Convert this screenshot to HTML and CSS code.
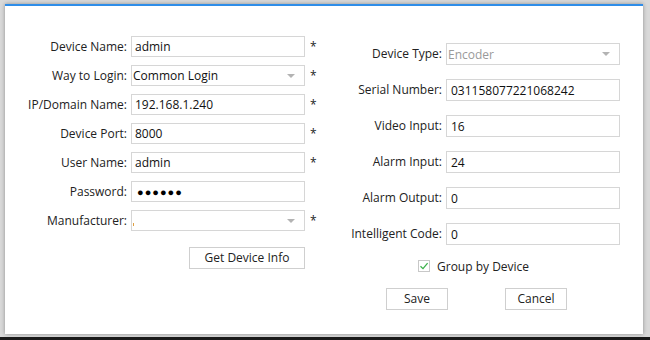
FILE: index.html
```html
<!DOCTYPE html>
<html>
<head>
<meta charset="utf-8">
<link rel="stylesheet" href="styles.css">
</head>
<body>
<div class="screen">
  <div class="dialog">
    <div class="col-left">
      <div class="lbl">Device Name:</div><div class="field">admin</div><div class="req">*</div>
      <div class="lbl">Way to Login:</div><div class="field combo">Common Login<span class="arrow"></span></div><div class="req">*</div>
      <div class="lbl">IP/Domain Name:</div><div class="field">192.168.1.240</div><div class="req">*</div>
      <div class="lbl">Device Port:</div><div class="field">8000</div><div class="req">*</div>
      <div class="lbl">User Name:</div><div class="field">admin</div><div class="req">*</div>
      <div class="lbl">Password:</div><div class="field pwd">●●●●●●</div><div class="req"></div>
      <div class="lbl">Manufacturer:</div><div class="field combo"><span class="caret"></span><span class="arrow"></span></div><div class="req">*</div>
      <div class="btn-cell"><div class="btn info">Get Device Info</div></div>
    </div>
    <div class="col-right">
      <div class="rgrid">
        <div class="lbl">Device Type:</div><div class="field combo disabled">Encoder<span class="arrow"></span></div>
        <div class="lbl">Serial Number:</div><div class="field">031158077221068242</div>
        <div class="lbl">Video Input:</div><div class="field">16</div>
        <div class="lbl">Alarm Input:</div><div class="field">24</div>
        <div class="lbl">Alarm Output:</div><div class="field">0</div>
        <div class="lbl">Intelligent Code:</div><div class="field">0</div>
      </div>
      <div class="check-row">
        <span class="checkbox"><svg width="10" height="10" viewBox="0 0 10 10"><path d="M1.5 5.2 L4 7.6 L8.6 2.2" fill="none" stroke="#3bb14a" stroke-width="1.3"/></svg></span>
        <span class="check-label">Group by Device</span>
      </div>
      <div class="btn-row">
        <div class="btn small">Save</div>
        <div class="btn small">Cancel</div>
      </div>
    </div>
  </div>
</div>
</body>
</html>
```
FILE: styles.css
```css
html, body {
  margin: 0;
  padding: 0;
}
body {
  width: 650px;
  height: 340px;
  overflow: hidden;
  background: #1a1a1a;
  font-family: "Open Sans", "Noto Sans", sans-serif;
  font-size: 12px;
  color: #1e1e1e;
}
.screen {
  width: 650px;
  height: 337px;
  background: #d9d9d9;
  padding: 4px 7px 3px 5px;
  box-sizing: border-box;
  display: flex;
}
.dialog {
  flex: 1;
  background: #fff;
  border-top: 2px solid #2f8de8;
  box-shadow: 0 0 4px rgba(0,0,0,0.35);
  display: flex;
}
.col-left {
  width: 325px;
  padding-top: 30px;
  display: grid;
  grid-template-columns: 122px 174px 1fr;
  grid-auto-rows: 21px;
  row-gap: 8px;
  column-gap: 4px;
  align-content: start;
}
.lbl {
  text-align: right;
  line-height: 21px;
  white-space: nowrap;
  color: #222;
}
.field {
  border: 1px solid #d6d6d6;
  box-sizing: border-box;
  padding-left: 3px;
  line-height: 20px;
  color: #111;
  position: relative;
  white-space: nowrap;
}
.combo {
  padding-left: 1px;
}
.disabled {
  color: #9a9a9a;
}
.arrow {
  position: absolute;
  right: 9px;
  top: 8px;
  width: 0;
  height: 0;
  border-left: 4px solid transparent;
  border-right: 4px solid transparent;
  border-top: 4px solid #b3b3b3;
}
.caret {
  position: absolute;
  left: 1px;
  top: 12px;
  width: 1px;
  height: 3px;
  background: #e0a040;
}
.pwd {
  font-size: 11px;
  letter-spacing: 1px;
  padding-left: 5px;
  line-height: 19px;
  color: #000;
}
.req {
  padding-left: 1px;
  line-height: 21px;
  color: #222;
}
.btn-cell {
  grid-column: 2;
  display: flex;
  justify-content: flex-end;
  margin-top: 8px;
}
.btn {
  border: 1px solid #cfcfcf;
  background: #fff;
  box-sizing: border-box;
  height: 22px;
  line-height: 20px;
  text-align: center;
  color: #222;
}
.info {
  width: 116px;
}
.col-right {
  flex: 1;
  padding-top: 37px;
  display: flex;
  flex-direction: column;
}
.rgrid {
  display: grid;
  grid-template-columns: 112px 174px;
  grid-auto-rows: 22px;
  row-gap: 14px;
  column-gap: 4px;
}
.rgrid .field {
  line-height: 21px;
  padding-left: 4px;
}
.rgrid .combo {
  padding-left: 1px;
}
.check-row {
  margin-top: 14px;
  padding-left: 88px;
  display: flex;
  align-items: center;
  height: 14px;
}
.checkbox {
  width: 12px;
  height: 12px;
  border: 1px solid #c8c8c8;
  box-sizing: border-box;
  display: flex;
  align-items: center;
  justify-content: center;
}
.check-label {
  margin-left: 7px;
  color: #222;
}
.btn-row {
  margin-top: 15px;
  padding-left: 56px;
  display: flex;
  gap: 57px;
}
.small {
  width: 62px;
}
```
